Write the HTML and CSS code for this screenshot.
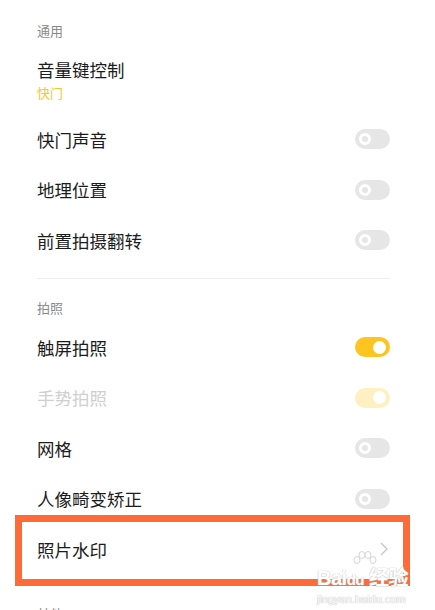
FILE: index.html
```html
<!DOCTYPE html>
<html lang="zh-CN">
<head>
    <meta charset="UTF-8">
    <meta name="viewport" content="width=device-width, initial-scale=1.0">
    <title>相机设置</title>
    <link rel="stylesheet" href="styles.css">
</head>
<body>
    <div class="settings">
        <div class="group-title">通用</div>
        <div class="item">
            <div class="item-label">音量键控制</div>
            <div class="item-sub">快门</div>
        </div>
        <div class="row"><span>快门声音</span><span class="switch"></span></div>
        <div class="row"><span>地理位置</span><span class="switch"></span></div>
        <div class="row"><span>前置拍摄翻转</span><span class="switch"></span></div>

        <div class="divider"></div>

        <div class="group-title spaced">拍照</div>
        <div class="row"><span>触屏拍照</span><span class="switch on"></span></div>
        <div class="row disabled"><span>手势拍照</span><span class="switch on"></span></div>
        <div class="row"><span>网格</span><span class="switch"></span></div>
        <div class="row"><span>人像畸变矫正</span><span class="switch"></span></div>
        <div class="row highlight">
            <span>照片水印</span>
            <svg class="chevron" width="8" height="14" viewBox="0 0 8 14"><path d="M1 1l6 6-6 6" fill="none" stroke="#c4c4c4" stroke-width="1.3"/></svg>
        </div>

        <div class="group-title more">其他</div>
    </div>

    <div class="watermark">
        <svg class="paw" width="30" height="22" viewBox="0 0 30 22">
            <g fill="#fff" stroke="#d6d6d6" stroke-width="1">
                <ellipse cx="8" cy="10" rx="3" ry="3.5"/>
                <ellipse cx="13" cy="5" rx="3" ry="3.5"/>
                <ellipse cx="19" cy="5" rx="3" ry="3.5"/>
                <ellipse cx="24" cy="10" rx="3" ry="3.5"/>
            </g>
        </svg>
        <div class="wm-brand">Bai<span class="wm-du">du</span> 经验</div>
        <div class="wm-url">jingyan.baidu.com</div>
    </div>
</body>
</html>
```

FILE: styles.css
```css
body {
    margin: 0;
    background: #fff;
    font-family: "Noto Sans CJK SC", "Noto Sans", sans-serif;
    color: #1c1c1c;
    overflow: hidden;
}
.settings {
    position: relative;
    padding: 22px 45px 0 37px;
}
.group-title {
    font-size: 13px;
    line-height: 18px;
    color: #8a8a8a;
}
.group-title.spaced {
    margin-top: 20px;
    margin-bottom: 5px;
}
.group-title.more {
    margin-top: 30px;
}
.item {
    margin: 18px 0 12px;
}
.item-label {
    font-size: 17.5px;
    line-height: 24px;
}
.item-sub {
    margin-top: 2px;
    font-size: 13px;
    line-height: 18px;
    color: #f6c62c;
}
.row {
    height: 50.5px;
    display: flex;
    align-items: center;
    justify-content: space-between;
    font-size: 17.5px;
}
.row.disabled {
    color: #cfcfcf;
}
.divider {
    margin-top: 12.5px;
    height: 1px;
    background: #eeeeee;
}
.switch {
    position: relative;
    width: 35px;
    height: 20px;
    border-radius: 10px;
    background: #e6e6e6;
}
.switch::after {
    content: "";
    position: absolute;
    left: 4px;
    top: 4px;
    width: 6px;
    height: 6px;
    border: 3px solid #fff;
    border-radius: 50%;
}
.switch.on {
    background: #fec520;
}
.switch.on::after {
    left: auto;
    right: 4px;
    top: 3.5px;
    width: 13px;
    height: 13px;
    border: 0;
    background: #fff;
}
.disabled .switch.on {
    background: #fff0c2;
}
.highlight {
    position: relative;
}
.highlight::after {
    content: "";
    position: absolute;
    left: -22px;
    right: -20px;
    top: -9.5px;
    bottom: -11px;
    border: 7px solid #fd6c38;
}
.chevron {
    margin-right: 2px;
}
.watermark {
    position: absolute;
    left: 317px;
    top: 550px;
    width: 95px;
    color: #fff;
    font-family: "Liberation Sans", "Noto Sans CJK SC", sans-serif;
}
.paw {
    display: block;
    margin-left: 32px;
}
.wm-brand {
    margin-top: -5px;
    font-size: 20px;
    font-weight: bold;
    line-height: 22px;
    letter-spacing: -0.5px;
    white-space: nowrap;
    text-shadow: 0 0 1px #bdbdbd, 0 0 1px #bdbdbd;
}
.wm-du {
    font-size: 15px;
}
.wm-url {
    margin-top: 2px;
    font-size: 11px;
    line-height: 12px;
    white-space: nowrap;
    text-shadow: 0 0 1px #bdbdbd, 0 0 1px #bdbdbd;
}
```
